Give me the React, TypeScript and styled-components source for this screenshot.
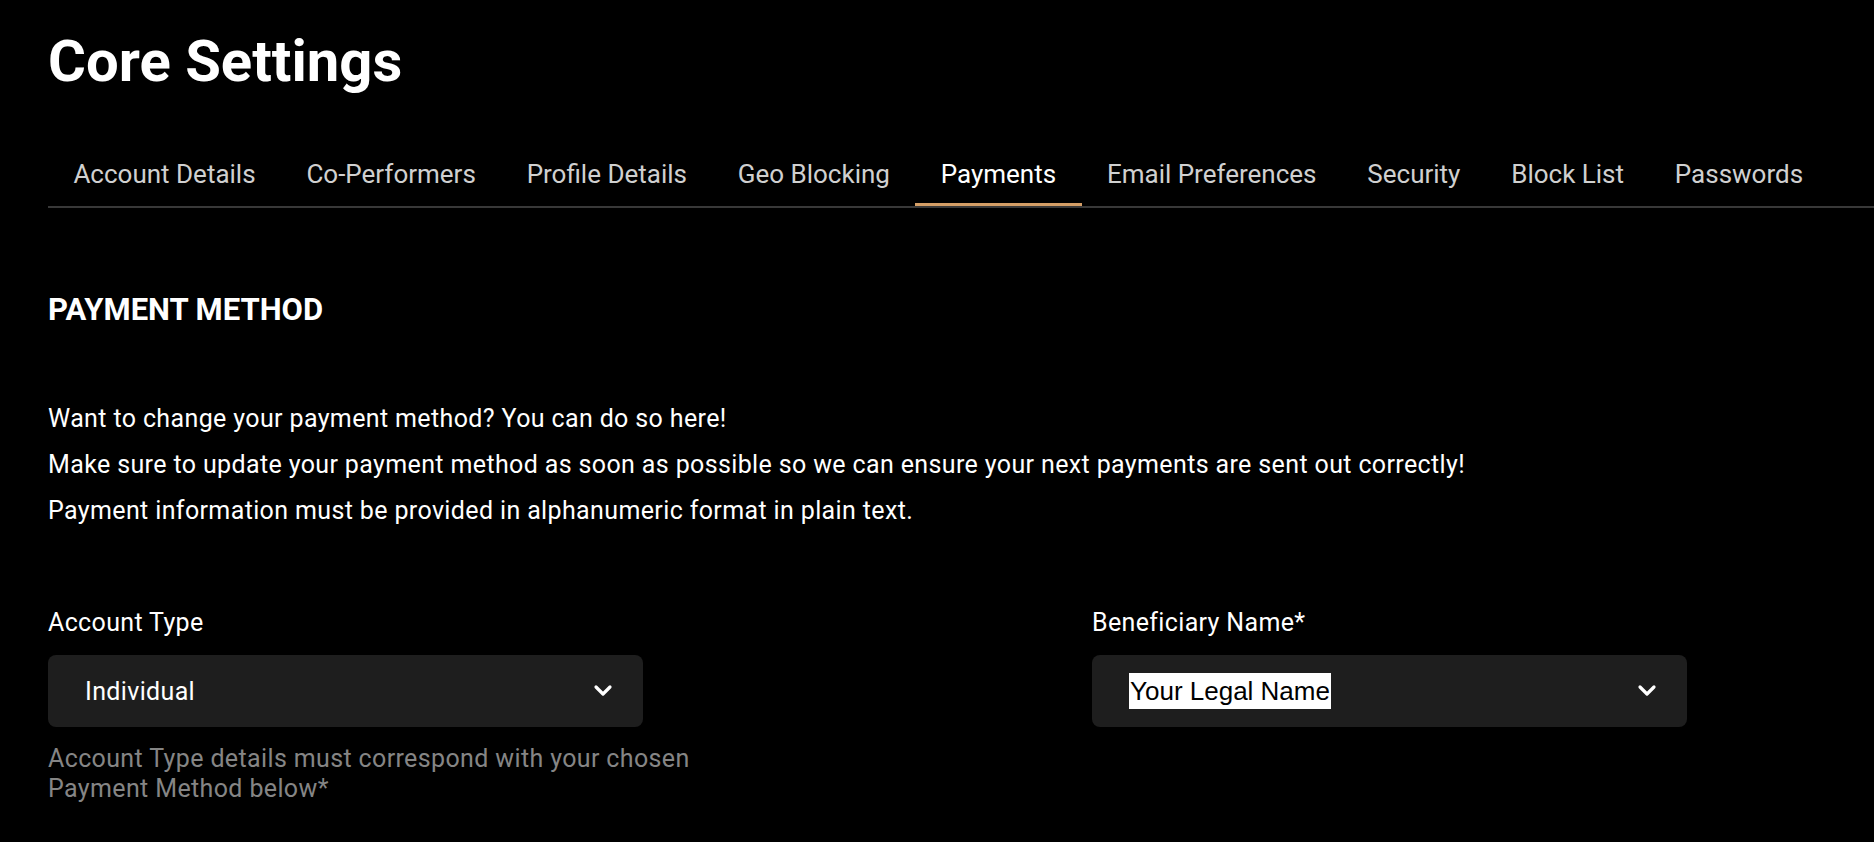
import React from "react";
import styled, { createGlobalStyle } from "styled-components";

const Global = createGlobalStyle`
  html, body { margin: 0; padding: 0; background: #000; }
  body { font-family: Roboto, "Noto Sans", Arial, sans-serif; color: #fff; }
  * { box-sizing: border-box; }
`;

const Page = styled.div`
  min-height: 842px;
  background: #000;
  padding: 26px 0 0 48px;
`;

const Title = styled.h1`
  margin: 0;
  font-size: 58px;
  font-weight: 700;
  line-height: 70px;
  color: #fff;
`;

const TabBar = styled.nav`
  display: flex;
  margin-top: 62px;
  border-bottom: 2px solid #383838;
`;

const Tab = styled.div<{ $active?: boolean }>`
  padding: 0 25.4px 13px;
  font-size: 26px;
  line-height: 32px;
  color: ${(p) => (p.$active ? "#fff" : "#d0d0d0")};
  border-bottom: 3px solid ${(p) => (p.$active ? "#d49e66" : "transparent")};
  white-space: nowrap;
`;

const SectionTitle = styled.h2`
  margin: 84px 0 0;
  font-size: 31px;
  font-weight: 700;
  line-height: 36px;
`;

const Intro = styled.div`
  margin-top: 68px;
  display: flex;
  flex-direction: column;
`;

const IntroLine = styled.p`
  margin: 0;
  font-size: 25px;
  line-height: 46px;
  letter-spacing: 0.37px;
  color: #fff;
`;

const FormGrid = styled.div`
  margin-top: 73px;
  display: grid;
  grid-template-columns: 1044px 1fr;
`;

const Field = styled.div`
  display: flex;
  flex-direction: column;
`;

const Label = styled.label`
  font-size: 25px;
  line-height: 32px;
  font-weight: 400;
  letter-spacing: 0.35px;
  color: #fff;
`;

const Select = styled.div`
  margin-top: 16px;
  width: 595px;
  height: 72px;
  background: #1e1e1e;
  border-radius: 8px;
  display: flex;
  align-items: center;
  justify-content: space-between;
  padding: 0 30px 0 37px;
`;

const SelectValue = styled.span`
  font-size: 25px;
  font-weight: 400;
  letter-spacing: 0.35px;
  color: #fff;
`;

const Highlighted = styled.span`
  font-family: "Liberation Sans", Arial, sans-serif;
  font-size: 26px;
  line-height: 36px;
  background: #fff;
  color: #000;
  padding: 0 1px;
`;

const Helper = styled.p`
  margin: 17px 0 0;
  font-size: 25px;
  line-height: 30px;
  letter-spacing: 0.37px;
  color: #858585;
  max-width: 700px;
`;

const Chevron = () => (
  <svg width="20" height="14" viewBox="0 0 20 14" fill="none">
    <polyline
      points="3,3 10,10 17,3"
      stroke="#fff"
      strokeWidth="3.2"
      strokeLinecap="round"
      strokeLinejoin="round"
    />
  </svg>
);

const tabs = [
  "Account Details",
  "Co-Performers",
  "Profile Details",
  "Geo Blocking",
  "Payments",
  "Email Preferences",
  "Security",
  "Block List",
  "Passwords",
];

export default function App() {
  return (
    <>
      <Global />
      <Page>
        <Title>Core Settings</Title>
        <TabBar>
          {tabs.map((t) => (
            <Tab key={t} $active={t === "Payments"}>
              {t}
            </Tab>
          ))}
        </TabBar>
        <SectionTitle>PAYMENT METHOD</SectionTitle>
        <Intro>
          <IntroLine>Want to change your payment method? You can do so here!</IntroLine>
          <IntroLine>
            Make sure to update your payment method as soon as possible so we can ensure your next payments are sent out correctly!
          </IntroLine>
          <IntroLine>Payment information must be provided in alphanumeric format in plain text.</IntroLine>
        </Intro>
        <FormGrid>
          <Field>
            <Label>Account Type</Label>
            <Select>
              <SelectValue>Individual</SelectValue>
              <Chevron />
            </Select>
            <Helper>
              Account Type details must correspond with your chosen Payment Method below*
            </Helper>
          </Field>
          <Field>
            <Label>Beneficiary Name*</Label>
            <Select>
              <Highlighted>Your Legal Name</Highlighted>
              <Chevron />
            </Select>
          </Field>
        </FormGrid>
      </Page>
    </>
  );
}
